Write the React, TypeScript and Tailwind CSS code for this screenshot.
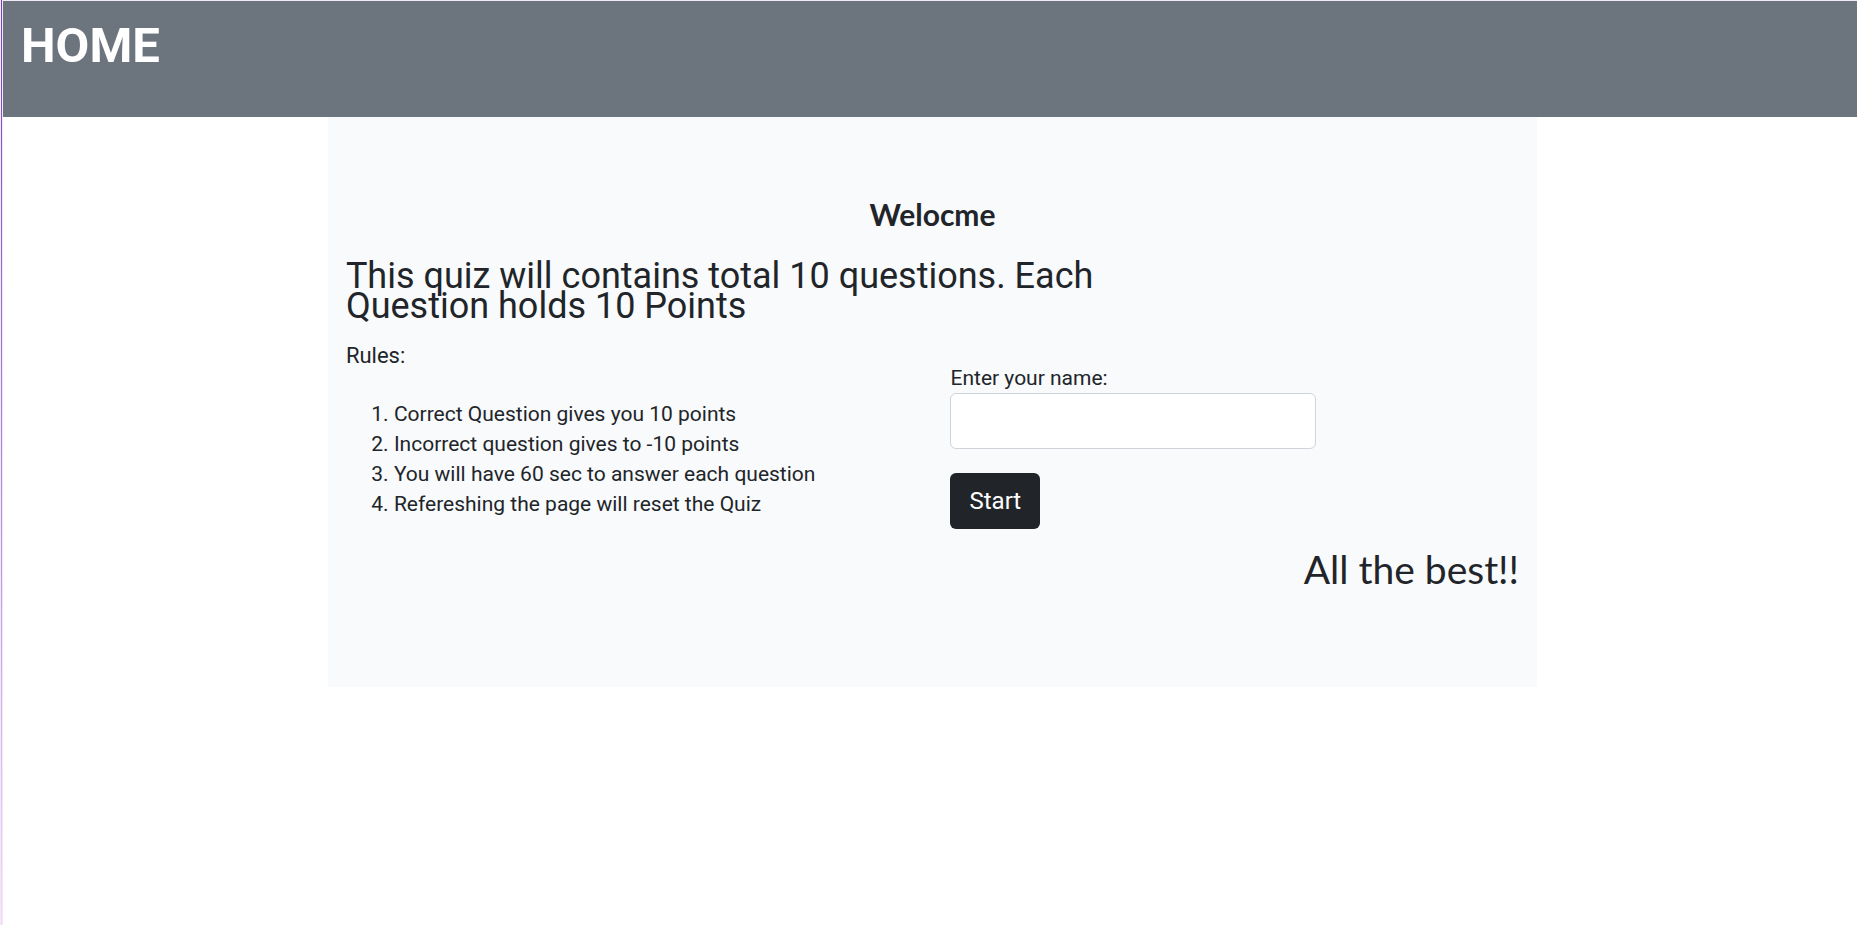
import { useState } from "react";

const rules = [
  "Correct Question gives you 10 points",
  "Incorrect question gives to -10 points",
  "You will have 60 sec to answer each question",
  "Refereshing the page will reset the Quiz",
];

export default function App() {
  const [name, setName] = useState("");

  return (
    <div className="flex min-h-screen bg-white font-['Roboto',sans-serif] text-[21px] leading-[30px] text-[#212529]">
      <div className="flex w-[3px] shrink-0 bg-[#f3e6f8]">
        <div className="ml-px w-px bg-linear-to-b from-[#6f42c1] via-[#a98ad8] to-[#f0dff2]" />
      </div>
      <div className="min-w-0 grow border-t border-[#f1eaf6]">
        <header className="h-[116px] bg-[#6c757d] px-[18px] pt-[15px]">
          <h1 className="text-[49px] leading-[60px] font-bold text-white">
            <a href="#home">HOME</a>
          </h1>
        </header>
        <div className="pl-[5px]">
          <main className="mx-auto w-[65.4%] bg-[#f8fafc] px-[18px] pt-[78px] pb-[94px]">
            <h2 className="text-center font-['Comic_Sans_MS','Lato',sans-serif] text-[30px] leading-[38px] font-bold">
              Welocme
            </h2>
            <p className="mt-[28px] w-2/3 text-[36px] leading-[30px]">
              This quiz will contains total 10 questions. Each Question holds 10 Points
            </p>
            <div className="mt-[20px] grid grid-cols-2 gap-x-[36px]">
              <section>
                <h3 className="text-[22px] leading-[30px]">Rules:</h3>
                <ol className="mt-[28px] list-decimal pl-[48px]">
                  {rules.map((rule) => (
                    <li key={rule}>{rule}</li>
                  ))}
                </ol>
              </section>
              <form className="pt-[22px]" onSubmit={(e) => e.preventDefault()}>
                <label htmlFor="name" className="block">
                  Enter your name:
                </label>
                <input
                  id="name"
                  type="text"
                  value={name}
                  onChange={(e) => setName(e.target.value)}
                  className="block h-[56px] w-[366px] max-w-full rounded-[6px] border border-[#ced4da] bg-white px-[14px]"
                />
                <button
                  type="submit"
                  className="mt-[24px] block h-[56px] rounded-[6px] bg-[#212529] px-[19px] text-[24px] text-white"
                >
                  Start
                </button>
              </form>
            </div>
            <p className="mt-[16px] text-right font-['Comic_Sans_MS','Lato',sans-serif] text-[39px] leading-[48px]">
              All the best!!
            </p>
          </main>
        </div>
      </div>
    </div>
  );
}
